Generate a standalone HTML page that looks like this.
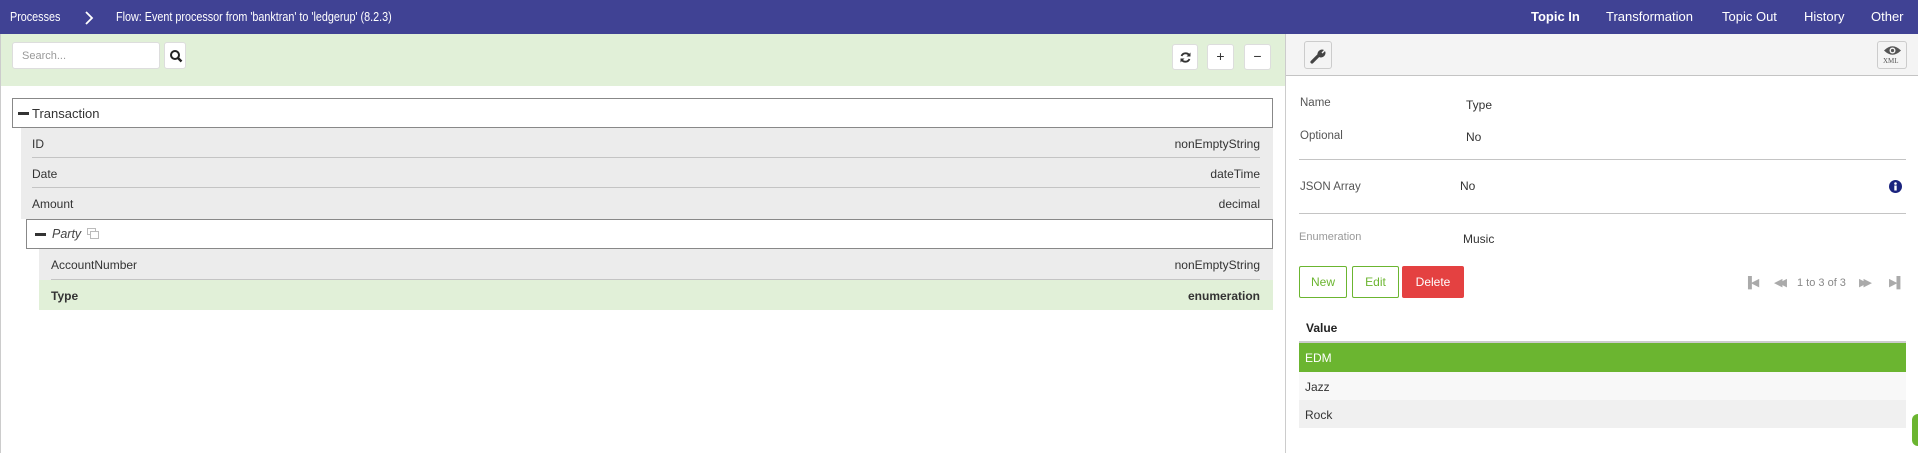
<!DOCTYPE html>
<html><head><meta charset="utf-8"><style>
*{box-sizing:border-box;margin:0;padding:0}
body{width:1918px;height:453px;overflow:hidden;background:#fff;font-family:"Liberation Sans",sans-serif;font-size:12px;color:#333;position:relative}
.a{position:absolute}
.top{left:0;top:0;width:1918px;height:34px;background:#404294;color:#fff;font-size:13px}
.top span{position:absolute;top:9px;white-space:nowrap}
.sq{transform:scaleX(0.83);transform-origin:left center}
.btn{position:absolute;background:#fff;border:1px solid #ddd;border-radius:3px}
.row{position:absolute;background:#ececec;height:30px}
.row .l{position:absolute;top:9px}
.row .r{position:absolute;top:9px;right:13px}
.row .ln{position:absolute;bottom:0;height:1px;background:#c4c4c4}
.lab{position:absolute;color:#555;font-size:11.5px}
</style></head><body>
<div class="a top">
<span class="sq" style="left:10px">Processes</span>
<svg class="a" style="left:84px;top:11px" width="10" height="14"><path d="M2 1 L8 7 L2 13" stroke="#fff" stroke-width="1.8" fill="none"/></svg>
<span class="sq" style="left:116px">Flow: Event processor from 'banktran' to 'ledgerup' (8.2.3)</span>
<span style="left:1531px;font-weight:bold">Topic In</span>
<span style="left:1606px">Transformation</span>
<span style="left:1722px">Topic Out</span>
<span style="left:1804px">History</span>
<span style="left:1871px">Other</span>
</div>
<div class="a" style="left:0;top:34px;width:1px;height:419px;background:#ccc"></div>
<div class="a" style="left:1px;top:34px;width:1284px;height:52px;background:#e1f0d8"></div>
<div class="btn" style="left:12px;top:42px;width:148px;height:27px;padding:7px 9px;color:#999;font-size:11px">Search...</div>
<div class="btn" style="left:164px;top:42px;width:22px;height:27px"><svg style="position:absolute;left:4px;top:6px" width="14" height="14"><circle cx="6" cy="6" r="4" stroke="#222" stroke-width="2" fill="none"/><path d="M9 9 L12.5 12.5" stroke="#222" stroke-width="2.4"/></svg></div>
<div class="btn" style="left:1172px;top:44px;width:26px;height:26px"><svg style="position:absolute;left:6px;top:6px" width="13" height="13"><path d="M10.5 4.5 A4.5 4.5 0 0 0 2.5 5 M2.5 8.5 A4.5 4.5 0 0 0 10.5 8" stroke="#333" stroke-width="1.8" fill="none"/><path d="M11.5 1.5 L11.5 5.5 L7.5 5.5Z M1.5 11.5 L1.5 7.5 L5.5 7.5Z" fill="#333"/></svg></div>
<div class="btn" style="left:1207px;top:44px;width:27px;height:26px;text-align:center;line-height:22px;font-size:14px">+</div>
<div class="btn" style="left:1244px;top:44px;width:27px;height:26px;text-align:center;line-height:22px;font-size:14px">−</div>

<div class="a" style="left:12px;top:98px;width:1261px;height:30px;border:1px solid #888;background:#fff"><div class="a" style="left:5px;top:13px;width:11px;height:3px;background:#333"></div><span class="a" style="left:19px;top:7px;font-size:13px">Transaction</span></div>
<div class="row" style="left:21px;top:128px;width:1252px"><span class="l" style="left:11px">ID</span><span class="r">nonEmptyString</span><div class="ln" style="left:11px;right:13px"></div></div>
<div class="row" style="left:21px;top:158px;width:1252px"><span class="l" style="left:11px">Date</span><span class="r">dateTime</span><div class="ln" style="left:11px;right:13px"></div></div>
<div class="row" style="left:21px;top:188px;width:1252px;height:31px"><span class="l" style="left:11px">Amount</span><span class="r">decimal</span></div>
<div class="a" style="left:26px;top:219px;width:1247px;height:30px;border:1px solid #888;background:#fff"><div class="a" style="left:8px;top:13px;width:11px;height:3px;background:#333"></div><span class="a" style="left:25px;top:7px;font-size:12.5px;font-style:italic;color:#444">Party</span><svg class="a" style="left:60px;top:8px" width="12" height="11"><rect x="0.5" y="0.5" width="8" height="6" fill="none" stroke="#bbb"/><rect x="3.5" y="3.5" width="8" height="7" fill="#fff" stroke="#bbb"/></svg></div>
<div class="row" style="left:39px;top:249px;width:1234px;height:31px"><span class="l" style="left:12px">AccountNumber</span><span class="r">nonEmptyString</span><div class="ln" style="left:12px;right:13px"></div></div>
<div class="row" style="left:39px;top:280px;width:1234px;background:#e1f0d8;font-weight:bold"><span class="l" style="left:12px">Type</span><span class="r">enumeration</span></div>

<div class="a" style="left:1285px;top:34px;width:1px;height:419px;background:#ccc"></div>
<div class="a" style="left:1286px;top:34px;width:632px;height:42px;background:#f4f4f4;border-bottom:1px solid #c4c4c4"></div>
<div class="btn" style="left:1304px;top:41px;width:28px;height:28px;background:#f4f4f4;border-color:#ccc"><svg style="position:absolute;left:5px;top:5px" width="17" height="17"><path d="M2 15 L9 8" stroke="#444" stroke-width="3.2" stroke-linecap="round"/><path d="M8 9 A4.5 4.5 0 0 1 14 3 L11.5 5.5 L12.5 6.5 L15 4 A4.5 4.5 0 0 1 9 10Z" fill="#444"/></svg></div>
<div class="btn" style="left:1877px;top:41px;width:30px;height:28px;background:#f4f4f4;border-color:#ccc"><svg style="position:absolute;left:5px;top:3px" width="19" height="11"><path d="M1 5.5 Q9.5 -3 18 5.5 Q9.5 14 1 5.5Z" fill="#555"/><circle cx="9.5" cy="5.5" r="3" fill="#f4f4f4"/><circle cx="9.5" cy="5.5" r="1.6" fill="#555"/></svg><span class="a" style="left:5px;top:15px;font-size:7px;color:#555;font-family:'Liberation Serif',serif">XML</span></div>

<span class="lab" style="left:1300px;top:97px">Name</span><span class="a" style="left:1466px;top:98px;font-size:12px">Type</span>
<span class="lab" style="left:1300px;top:130px">Optional</span><span class="a" style="left:1466px;top:130px;font-size:12px">No</span>
<div class="a" style="left:1299px;top:159px;width:607px;height:1px;background:#c4c4c4"></div>
<span class="lab" style="left:1300px;top:181px">JSON Array</span><span class="a" style="left:1460px;top:179px;font-size:12px">No</span>
<svg class="a" style="left:1889px;top:180px" width="13" height="13"><circle cx="6.5" cy="6.5" r="6.5" fill="#1a237e"/><rect x="5.3" y="5.5" width="2.4" height="5" fill="#fff"/><circle cx="6.5" cy="3.5" r="1.3" fill="#fff"/></svg>
<div class="a" style="left:1299px;top:213px;width:607px;height:1px;background:#c4c4c4"></div>
<span class="lab" style="left:1299px;top:231px;color:#999;font-size:11px">Enumeration</span><span class="a" style="left:1463px;top:232px;font-size:12px">Music</span>

<div class="a" style="left:1299px;top:266px;width:48px;height:32px;border:1px solid #6bb530;border-radius:2px;color:#6bb530;text-align:center;line-height:30px">New</div>
<div class="a" style="left:1352px;top:266px;width:47px;height:32px;border:1px solid #6bb530;border-radius:2px;color:#6bb530;text-align:center;line-height:30px">Edit</div>
<div class="a" style="left:1402px;top:266px;width:62px;height:32px;background:#e44141;border-radius:2px;color:#fff;text-align:center;line-height:32px">Delete</div>
<div class="a" style="left:1744px;top:276px;color:#aaa;font-size:11px;letter-spacing:-1px">▐◀</div>
<div class="a" style="left:1774px;top:276px;color:#aaa;font-size:11px;letter-spacing:-4px">◀◀</div>
<span class="a" style="left:1797px;top:277px;color:#888;font-size:11px">1 to 3 of 3</span>
<div class="a" style="left:1859px;top:276px;color:#aaa;font-size:11px;letter-spacing:-4px">▶▶</div>
<div class="a" style="left:1889px;top:276px;color:#aaa;font-size:11px;letter-spacing:-1px">▶▌</div>

<span class="a" style="left:1306px;top:321px;font-weight:bold;color:#222">Value</span>
<div class="a" style="left:1299px;top:341px;width:607px;height:2px;background:#ccc"></div>
<div class="a" style="left:1299px;top:343px;width:607px;height:29px;background:#6bb530;color:#fff;padding:8px 6px">EDM</div>
<div class="a" style="left:1299px;top:372px;width:607px;height:28px;background:#f8f8f8;padding:8px 6px">Jazz</div>
<div class="a" style="left:1299px;top:400px;width:607px;height:28px;background:#f0f0f0;padding:8px 6px">Rock</div>
<div class="a" style="left:1912px;top:414px;width:12px;height:32px;background:#6bb530;border-radius:6px"></div>
</body></html>
